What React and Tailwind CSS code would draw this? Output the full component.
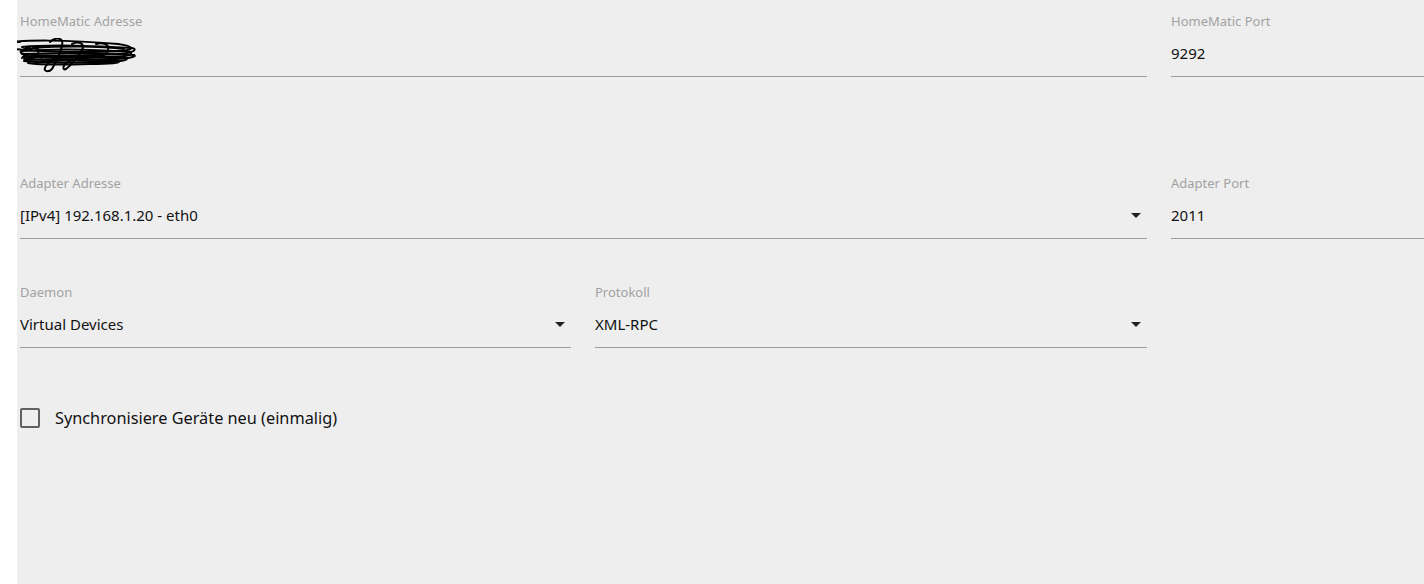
import React from 'react';

const FONT = { fontFamily: '"Noto Sans", "Open Sans", sans-serif' };

const Caret = () => (
  <svg width="10" height="5" viewBox="0 0 10 5" className="shrink-0">
    <path d="M0 0 L10 0 L5 5 Z" fill="#222" />
  </svg>
);

// hand-drawn redaction over the address value
const Scribble = () => (
  <svg width="140" height="36" viewBox="0 0 140 36" className="absolute -left-[20px] -top-[3px]">
    <g fill="none" stroke="#000" strokeWidth="2" strokeLinecap="round">
      <path d="M2 6 C20 1 70 2 118 6 C134 8 136 12 120 13 C90 15 30 14 8 10 C0 8 4 4 20 4" />
      <path d="M22 9 C40 7 80 7 132 10 C138 11 134 15 120 16 C80 18 40 18 24 16 C18 15 20 11 30 10" />
      <path d="M22 13 C50 11 90 11 130 14 C134 16 128 19 110 19 C80 20 45 20 24 18" />
      <path d="M22 16 C50 15 90 15 134 17 C138 19 126 21 110 21 C80 22 45 22 24 21" />
      <path d="M24 19 C50 18 90 18 126 20 C130 22 120 24 100 24 C70 25 40 25 24 23" />
      <path d="M26 22 C50 21 90 21 118 23 C122 25 110 26 90 26 C60 27 40 27 28 25" />
      <path d="M50 4 C54 0 60 -1 62 3 C64 8 56 24 52 31 C48 35 42 33 46 28 C52 20 60 16 66 18" />
      <path d="M72 6 C78 3 86 5 82 12 C78 20 70 28 66 31 C62 33 62 26 70 23 C80 20 92 20 100 18" />
      <path d="M30 12 C34 8 40 10 38 16 C36 20 30 22 28 18" />
      <path d="M96 6 C102 4 110 6 108 12 C106 18 98 20 94 17" />
      <path d="M40 24 C60 22 90 22 112 25" />
      <path d="M34 10 C60 8 100 8 124 11" />
      <path d="M22 20 C26 14 28 24 32 18 C36 12 38 24 44 18" />
    </g>
  </svg>
);

const Field = ({ label, value, select, redacted, className }) => (
  <div className={`flex flex-col ${className}`}>
    <span className="text-[13px] leading-[16px] text-[#a2a2a2]">{label}</span>
    <div className="mt-[12px] flex h-[24px] items-center justify-between pr-[6px]">
      <span className="relative text-[15px] leading-[24px] text-[#111]">
        {redacted ? (
          <>
            <span className="invisible">xx.xx.xx.xx</span>
            <Scribble />
          </>
        ) : (
          value
        )}
      </span>
      {select ? <Caret /> : null}
    </div>
    <div className="mt-[11px] h-px bg-[#9e9e9e]" />
  </div>
);

export default function App() {
  return (
    <div className="flex h-[584px] w-[1424px] overflow-hidden bg-white" style={FONT}>
      <div className="w-[17px] shrink-0 bg-white" />
      <div className="flex flex-1 flex-col overflow-hidden bg-[#eeeeee] pl-[3px] pt-[13px]">
        <div className="flex gap-[24px]">
          <Field label="HomeMatic Adresse" redacted className="w-[1127px] shrink-0" />
          <Field label="HomeMatic Port" value="9292" className="w-[300px] shrink-0" />
        </div>

        <div className="mt-[98px] flex gap-[24px]">
          <Field label="Adapter Adresse" value="[IPv4] 192.168.1.20 - eth0" select className="w-[1127px] shrink-0" />
          <Field label="Adapter Port" value="2011" className="w-[300px] shrink-0" />
        </div>

        <div className="mt-[45px] flex gap-[24px]">
          <Field label="Daemon" value="Virtual Devices" select className="w-[551px] shrink-0" />
          <Field label="Protokoll" value="XML-RPC" select className="w-[552px] shrink-0" />
        </div>

        <label className="mt-[60px] flex items-center gap-[15px]">
          <span className="h-[20px] w-[20px] rounded-[2px] border-2 border-[#616161]" />
          <span className="text-[16.3px] leading-[20px] text-[#111]">Synchronisiere Geräte neu (einmalig)</span>
        </label>
      </div>
    </div>
  );
}
